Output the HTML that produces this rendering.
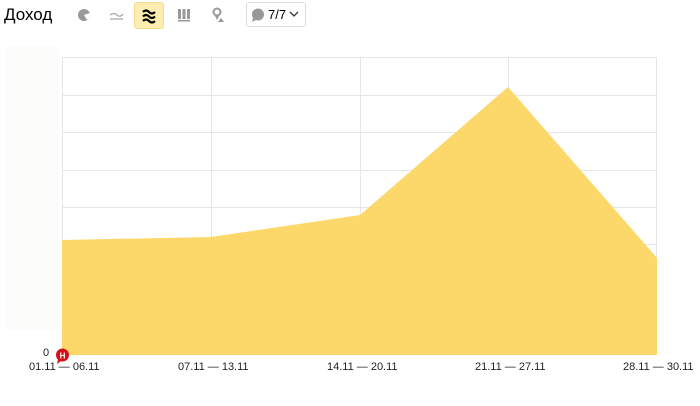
<!DOCTYPE html>
<html><head><meta charset="utf-8"><style>
body{margin:0;width:700px;height:406px;background:#fff;font-family:"Liberation Sans",sans-serif;position:relative;overflow:hidden}
.t{position:absolute;left:4px;top:5px;font-size:17px;color:#000}
.ic{position:absolute;top:2px;width:28px;height:26px}
.sel{background:#fdedb0;border-radius:3px;border:1px solid #f2dc8e;box-sizing:border-box}
.btn{position:absolute;left:246px;top:2px;width:60px;height:25px;border:1px solid #ddd;border-radius:3px;box-sizing:border-box;font-size:13px}
.lbl{position:absolute;top:361px;font-size:11px;color:#222}
</style></head><body>
<div class="t">Доход</div>
<svg class="ic" style="left:70px" viewBox="0 0 28 26"><circle cx="14" cy="13" r="6" fill="#999"/><path d="M14 13 L20 11 A6 6 0 0 1 17 18 Z" fill="#fff"/></svg>
<svg class="ic" style="left:102px" viewBox="0 0 28 26"><path d="M8 13 Q12 10 15 13 T21 12" stroke="#aaa" fill="none" stroke-width="1.3"/><path d="M8 17 H21" stroke="#aaa" stroke-width="1.3"/></svg>
<div class="ic sel" style="left:134px;width:30px;height:27px"><svg width="28" height="26" viewBox="0 0 28 26"><path d="M8 9 Q11 6 14 9 T20 9 M8 13.5 Q11 10.5 14 13.5 T20 13.5 M8 18 Q11 15 14 18 T20 18" stroke="#000" stroke-width="2.2" fill="none"/></svg></div>
<svg class="ic" style="left:170px" viewBox="0 0 28 26"><rect x="8" y="7" width="3" height="10" fill="#999"/><rect x="12.5" y="7" width="3" height="10" fill="#999"/><rect x="17" y="7" width="3" height="10" fill="#999"/><rect x="8" y="18" width="12" height="1.5" fill="#999"/></svg>
<svg class="ic" style="left:203px" viewBox="0 0 28 26"><circle cx="14" cy="10" r="3.5" stroke="#999" stroke-width="2" fill="none"/><path d="M12 14 L14 18 L16 14" fill="#999"/><path d="M15 20 L18 16 L21 20Z" fill="#999"/></svg>
<div class="btn"><svg width="14" height="14" style="position:absolute;left:4px;top:5px" viewBox="0 0 14 14"><circle cx="7" cy="6.5" r="6" fill="#999"/><path d="M2 10 L1 14 L5 12Z" fill="#999"/></svg><span style="position:absolute;left:21px;top:4px">7/7</span><svg width="10" height="8" style="position:absolute;left:42px;top:8px" viewBox="0 0 10 8"><path d="M1 1 L5 5 L9 1" stroke="#333" fill="none" stroke-width="1.3"/></svg></div>
<div style="position:absolute;left:5px;top:46px;width:53px;height:284px;background:#fcfcfa;border-radius:4px"></div>
<svg style="position:absolute;left:0;top:0" width="700" height="406">
<g stroke="#e6e6e6" stroke-width="1">
<path d="M62 57.5H657M62 95.5H657M62 132.5H657M62 170.5H657M62 207.5H657M62 244.5H657M62 281.5H657M62 318.5H657M62 354.5H657"/>
<path d="M62.5 57V355M211.5 57V355M360.5 57V355M508.5 57V355M656.5 57V355"/>
</g>
<path d="M62 240 L211 237 L360 215 L508 87 L657 258 L657 355 L62 355Z" fill="#fbd55e" fill-opacity="0.93"/>
<circle cx="62.5" cy="355" r="6.5" fill="#d4111a"/><path d="M58 359 L57 364 L61 361Z" fill="#d4111a"/>
<text x="62.5" y="358.5" font-size="8" font-weight="bold" fill="#fff" text-anchor="middle" font-family="Liberation Sans">Н</text>
</svg>
<div class="lbl" style="left:43px;top:347px">0</div>
<div class="lbl" style="left:29px">01.11 — 06.11</div>
<div class="lbl" style="left:178px">07.11 — 13.11</div>
<div class="lbl" style="left:327px">14.11 — 20.11</div>
<div class="lbl" style="left:475px">21.11 — 27.11</div>
<div class="lbl" style="left:623px">28.11 — 30.11</div>
</body></html>
